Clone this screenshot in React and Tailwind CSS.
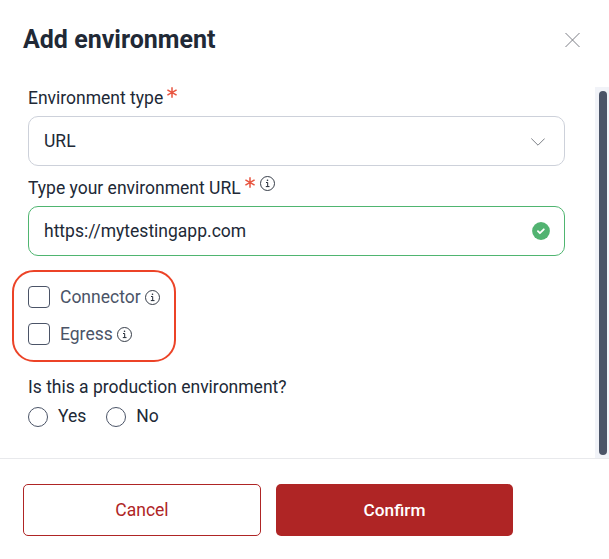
import React, { useState } from 'react';

const AddEnvironment = () => {
  const [url, setUrl] = useState('https://mytestingapp.com');
  const [production, setProduction] = useState('');

  // Optional network features of the environment
  const options = [
    { id: 'connector', label: 'Connector' },
    { id: 'egress', label: 'Egress' }
  ];

  return (
    <div className="flex h-[559px] w-[609px] flex-col overflow-hidden bg-white font-['Roboto',sans-serif] text-[17.5px] leading-5 text-[#212936]">
      {/* Header */}
      <div className="flex h-[87px] shrink-0 items-center justify-between pt-0 pr-[29px] pb-[7px] pl-[23px]">
        <h1 className="text-[25px] leading-8 font-bold">Add environment</h1>
        <button type="button" aria-label="Close">
          <CloseIcon />
        </button>
      </div>

      <div className="flex h-[371px] shrink-0 justify-between">
        <div className="w-[565px] pl-7">
          <div className="flex h-[29px] items-start pt-px">
            <span>Environment type</span>
            <Asterisk />
          </div>
          <div className="flex h-[50px] items-center justify-between rounded-[10px] border border-[#cdd1da] pr-[19px] pl-[15px]">
            <span>URL</span>
            <ChevronIcon />
          </div>

          <div className="flex h-10 items-start pt-3">
            <span>Type your environment URL</span>
            <Asterisk />
            <InfoIcon className="-mt-0.5 ml-[5px]" />
          </div>
          <div className="flex h-[50px] items-center justify-between rounded-[10px] border border-[#4fb570] pr-3.5 pl-[15px]">
            <input
              className="w-[400px] outline-none"
              value={url}
              onChange={(e) => setUrl(e.target.value)}
            />
            <ValidIcon />
          </div>

          <div className="mt-3.5 -ml-4 flex h-[92px] w-[164px] flex-col gap-[15px] rounded-[22px] border-2 border-[#ec4327] pt-3.5 pl-3.5 text-[#4b5467]">
            {options.map((option) => (
              <label key={option.id} className="flex h-[22px] items-center">
                <input
                  type="checkbox"
                  className="size-[22px] appearance-none rounded-[4px] border border-[#4b5467] checked:bg-[#4b5467]"
                />
                <span className="ml-2.5">{option.label}</span>
                <InfoIcon className="ml-1" />
              </label>
            ))}
          </div>

          <p className="mt-[15px]">Is this a production environment?</p>
          <div className="mt-2.5 flex gap-5">
            {['Yes', 'No'].map((answer) => (
              <label key={answer} className="flex h-5 items-center gap-2.5">
                <input
                  type="radio"
                  name="production"
                  className="size-5 appearance-none rounded-full border border-[#4b5467] checked:border-[6px]"
                  checked={production === answer}
                  onChange={() => setProduction(answer)}
                />
                <span className="pb-0.5">{answer}</span>
              </label>
            ))}
          </div>
        </div>

        <div className="w-3.5 bg-[#f1f3f8] py-1 pl-1">
          <div className="h-[364px] w-2 rounded-full bg-[#4b5467]" />
        </div>
      </div>

      {/* Actions */}
      <div className="flex flex-1 gap-[15px] border-t border-[#e8e9ec] pt-[25px] pl-[23px]">
        <button type="button" className="h-[52px] w-[238px] rounded-[5px] border border-[#af2525] text-[#af2525]">
          Cancel
        </button>
        <button type="button" className="h-[52px] w-[237px] rounded-[5px] bg-[#af2525] text-[17.25px] font-medium text-white">
          Confirm
        </button>
      </div>
    </div>
  );
};

/* ---------------------------
   Icons
   --------------------------- */

const Asterisk = () => (
  <svg className="-mt-px ml-1 h-[11px] w-2.5" viewBox="0 0 10 11" fill="none" stroke="#e8543f" strokeWidth="1.5">
    <path d="M5 0.2v10.6M0.4 2.8l9.2 5.4M9.6 2.8l-9.2 5.4" />
  </svg>
);

const InfoIcon = ({ className }) => (
  <svg className={`size-[15px] shrink-0 ${className}`} viewBox="0 0 15 15" fill="none" stroke="#212936">
    <circle cx="7.5" cy="7.5" r="7" strokeWidth="0.9" />
    <path d="M6 6.5h1.7v4M5.8 10.6h3.7" strokeWidth="1" />
    <circle cx="7.5" cy="4.3" r="0.8" fill="#212936" stroke="none" />
  </svg>
);

const ChevronIcon = () => (
  <svg className="mt-0.5 h-2 w-3.5" viewBox="0 0 14 8" fill="none" stroke="#7c7f86" strokeWidth="1">
    <path d="M0.3 0.5L7 7.2l6.7-6.7" />
  </svg>
);

const CloseIcon = () => (
  <svg className="h-3.5 w-[15px]" viewBox="0 0 15 14" fill="none" stroke="#7c7f86" strokeWidth="1">
    <path d="M0.5 0l14 14M14.5 0l-14 14" />
  </svg>
);

const ValidIcon = () => (
  <svg className="size-[18px]" viewBox="0 0 18 18" fill="none">
    <circle cx="9" cy="9" r="8.9" fill="#52b371" />
    <path d="M5.9 9.2l2 2 3.9-3.9" stroke="#fff" strokeWidth="1.8" strokeLinecap="round" strokeLinejoin="round" />
  </svg>
);

export default AddEnvironment;
